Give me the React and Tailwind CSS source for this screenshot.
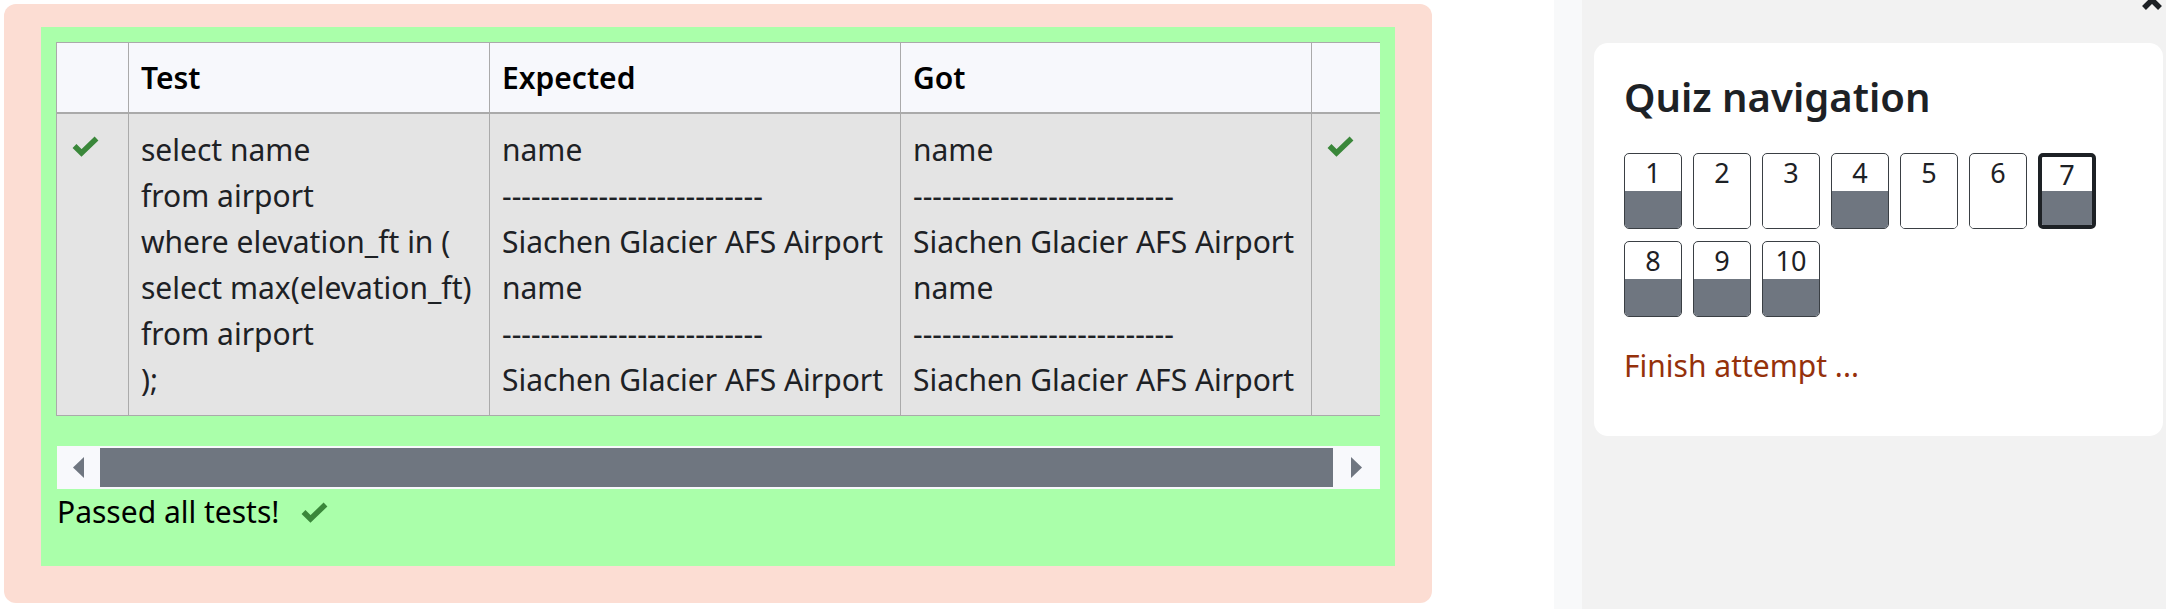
import React from 'react';

const NAV = [
  { n: 1, done: true },
  { n: 2, done: false },
  { n: 3, done: false },
  { n: 4, done: true },
  { n: 5, done: false },
  { n: 6, done: false },
  { n: 7, done: true, current: true },
  { n: 8, done: true },
  { n: 9, done: true },
  { n: 10, done: true },
];

const TEST_SQL = 'select name\nfrom airport\nwhere elevation_ft in (\nselect max(elevation_ft)\nfrom airport\n);';
const DASHES = '-'.repeat(27);
const RESULT = `name\n${DASHES}\nSiachen Glacier AFS Airport\nname\n${DASHES}\nSiachen Glacier AFS Airport`;

function Tick({ className = '' }) {
  return (
    <svg width="27" height="21" viewBox="0 0 27 21" className={className}>
      <polyline points="2.5,10 9.5,17 24.5,2.5" fill="none" stroke="#3a873a" strokeWidth="5.5" />
    </svg>
  );
}

function NavButton({ n, done, current }) {
  return (
    <div
      className={`flex h-[76px] w-[58px] flex-col overflow-hidden rounded-[5px] bg-white ${
        current ? 'border-4 border-[#1d2125]' : 'border border-[#3a3f44]'
      }`}
    >
      <div className="flex flex-1 items-center justify-center text-[27px] leading-none text-[#1d2125]">{n}</div>
      <div className={`flex-1 ${done ? 'bg-[#6f7680]' : 'bg-white'}`} />
    </div>
  );
}

function ResultTable() {
  return (
    <div className="w-[1324px] overflow-hidden">
      <div className="w-[1326px] border-b border-l border-t border-[#aaaaaa]">
        <div className="flex h-[71px] border-b-2 border-[#aaaaaa] bg-[#f7f8fc] text-[30px] font-semibold leading-[46px] text-black">
          <div className="w-[72px] border-r border-[#aaaaaa]" />
          <div className="flex w-[361px] items-center border-r border-[#aaaaaa] px-3">Test</div>
          <div className="flex w-[411px] items-center border-r border-[#aaaaaa] px-3">Expected</div>
          <div className="flex w-[411px] items-center border-r border-[#aaaaaa] px-3">Got</div>
          <div className="w-[70px]" />
        </div>
        <div className="flex bg-[#e4e4e4] text-[30px] leading-[46px] text-[#1d2125]">
          <div className="w-[72px] border-r border-[#aaaaaa] pl-[15px] pt-[22px]">
            <Tick className="block" />
          </div>
          <div className="w-[361px] whitespace-pre border-r border-[#aaaaaa] px-3 pb-[12px] pt-[13px]">{TEST_SQL}</div>
          <div className="w-[411px] whitespace-pre border-r border-[#aaaaaa] px-3 pb-[12px] pt-[13px]">{RESULT}</div>
          <div className="w-[411px] whitespace-pre border-r border-[#aaaaaa] px-3 pb-[12px] pt-[13px]">{RESULT}</div>
          <div className="w-[70px] pl-[15px] pt-[22px]">
            <Tick className="block" />
          </div>
        </div>
      </div>
    </div>
  );
}

function FakeScrollbar() {
  return (
    <div className="ml-[1px] mt-[30px] flex h-[43px] w-[1323px] items-center bg-[#f8f9fc]">
      <div className="flex h-full w-[43px] items-center justify-center">
        <svg width="11" height="21" viewBox="0 0 11 21">
          <polygon points="11,0 0,10.5 11,21" fill="#6f7680" />
        </svg>
      </div>
      <div className="h-[39px] w-[1233px] bg-[#6f7680]" />
      <div className="flex h-full flex-1 items-center justify-center">
        <svg width="11" height="21" viewBox="0 0 11 21">
          <polygon points="0,0 11,10.5 0,21" fill="#6f7680" />
        </svg>
      </div>
    </div>
  );
}

export default function App() {
  return (
    <div className="flex h-[609px] w-[2166px] overflow-hidden bg-white font-['Noto_Sans',sans-serif] text-[#1d2125]">
      <div className="pl-[4px] pt-[4px]">
        <div className="h-[599px] w-[1428px] rounded-[12px] bg-[#fcddd3] px-[37px] pt-[23px]">
          <div className="h-[539px] w-[1354px] bg-[#aaffaa] pl-[15px] pt-[15px]">
            <ResultTable />
            <FakeScrollbar />
            <div className="ml-[1px] flex items-start text-[30px] leading-[46px] text-black">
              <span>Passed all tests!</span>
              <Tick className="ml-[22px] mt-[13px]" />
            </div>
          </div>
        </div>
      </div>

      <div className="w-[122px] shrink-0" />
      <div className="w-[28px] shrink-0 bg-[#f8f9fa]" />

      <div className="relative flex-1 bg-[#f2f2f2] pl-[12px] pt-[43px]">
        <svg width="22" height="18" viewBox="0 0 22 18" className="absolute right-[3px] top-[-7px]">
          <polyline points="3,15 11,7 19,15" fill="none" stroke="#1d2125" strokeWidth="5.5" />
        </svg>

        <div className="h-[393px] w-[569px] rounded-[14px] bg-white pl-[30px] pt-[30px]">
          <h3 className="text-[40px] font-semibold leading-[48px] text-[#1d2125]">Quiz navigation</h3>
          <div className="mt-[32px] grid grid-cols-[repeat(7,58px)] gap-x-[11px] gap-y-[12px]">
            {NAV.map((b) => (
              <NavButton key={b.n} {...b} />
            ))}
          </div>
          <div className="mt-[26px] text-[30px] leading-[46px] text-[#95310b]">Finish attempt ...</div>
        </div>
      </div>
    </div>
  );
}
